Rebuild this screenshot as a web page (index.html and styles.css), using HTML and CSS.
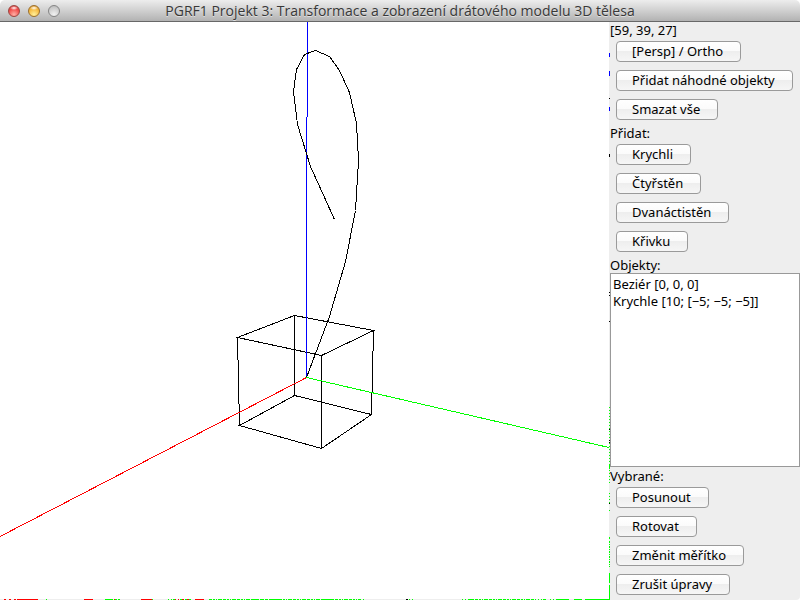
FILE: index.html
```html
<!DOCTYPE html>
<html lang="cs">
<head>
<meta charset="utf-8">
<title>PGRF1 Projekt 3</title>
<link rel="stylesheet" href="styles.css">
</head>
<body>
<div class="window">
  <header class="titlebar">
    <div class="lights">
      <button class="light red" type="button" aria-label="Zavřít"></button>
      <button class="light yellow" type="button" aria-label="Minimalizovat"></button>
      <button class="light gray" type="button" aria-label="Zvětšit"></button>
    </div>
    <h1 class="title">PGRF1 Projekt 3: Transformace a zobrazení drátového modelu 3D tělesa</h1>
  </header>
  <main class="content">
    <div class="scene">
      <svg class="drawing" viewBox="0 22 610 578" preserveAspectRatio="xMinYMin slice" aria-hidden="true">
        <rect class="edge" x="0" y="599" width="610" height="1"/>
        <rect class="edge" x="609" y="22" width="1" height="578"/>
        <g class="wire">
          <path class="k" d="M237.5 337.5L294.5 315.5L373.5 330.5L321.5 355.5ZM239.5 425.5L294.5 395.5L371.5 414.5L321.5 448.5ZM237.5 337.5L239.5 425.5M294.5 315.5V395.5M373.5 330.5L371.5 414.5M321.5 355.5V448.5"/>
          <path class="r" d="M306.5 377.5L0 536.5"/>
          <path class="g" d="M306.5 377.5L609 447.5"/>
          <path class="b" d="M306.5 377V117M307.5 117V22"/>
          <path class="k" d="M306.5 377.5L329.5 316.5L345.5 261.5L355.5 210.5L358.5 160.5L356.5 123.5L349.5 92.5L339.5 70.5L329.5 56.5L315.5 50.5L304.5 54.5L296.5 69.5L293.5 91.5L297.5 124.5L310.5 166.5L334.5 219.5"/>
        </g>
        <g class="wire">
          <path class="b" d="M609.5 53v4M609.5 71v5M609.5 107v4"/>
          <path class="k" d="M609.5 98v1M609.5 154v3M609.5 292v1M609.5 295v1M609.5 321v1"/>
          <path class="g" stroke-dasharray="1 2" d="M609.5 407V464M609.5 470V485M609.5 493V504"/>
          <path class="g" d="M609.5 464v5M609.5 510v1M609.5 537v2M609.5 573v10M609.5 585v15"/>
          <path class="g" stroke-dasharray="2 1 1 1" d="M609.5 541V567"/>
          <path class="k" d="M609.5 429v1M609.5 440v1M609.5 442v1M609.5 503v1"/>
          <path class="r" d="M4 599.5h2M9 599.5h2M14 599.5h2M17 599.5h21M84 599.5h9M114 599.5h1M141 599.5h11M175 599.5h1M178 599.5h1M182 599.5h2M187 599.5h2M195 599.5h9"/>
          <path class="g" d="M46 599.5h1M105 599.5h8M115 599.5h2M118 599.5h2M152 599.5h1M168 599.5h1M171 599.5h1M173 599.5h2M180 599.5h2M185 599.5h2M189 599.5h2M252 599.5h6M271 599.5h8M324 599.5h8M363 599.5h1M409 599.5h1M412 599.5h1M462 599.5h1M465 599.5h1M468 599.5h6M556 599.5h13M574 599.5h8M585 599.5h24"/>
          <path class="g" stroke-dasharray="3 1 2 1 1 1 4 1" d="M209 599.5H361M475 599.5H536"/>
          <path class="g" d="M538 599.5h1M541 599.5h1M543 599.5h3M550 599.5h1M553 599.5h1"/>
          <path class="k" d="M406 599.5h2"/>
        </g>
      </svg>
    </div>
    <aside class="panel">
      <p class="label">[59, 39, 27]</p>
      <div class="buttons">
        <button class="btn" type="button">[Persp] / Ortho</button>
        <button class="btn" type="button">Přidat náhodné objekty</button>
        <button class="btn" type="button">Smazat vše</button>
      </div>
      <p class="label">Přidat:</p>
      <div class="buttons">
        <button class="btn" type="button">Krychli</button>
        <button class="btn" type="button">Čtyřstěn</button>
        <button class="btn" type="button">Dvanáctistěn</button>
        <button class="btn" type="button">Křivku</button>
      </div>
      <label class="label" for="objects">Objekty:</label>
      <select class="list" id="objects" size="11">
        <option>Beziér [0, 0, 0]</option>
        <option>Krychle [10; [−5; −5; −5]]</option>
      </select>
      <p class="label">Vybrané:</p>
      <div class="buttons">
        <button class="btn" type="button">Posunout</button>
        <button class="btn" type="button">Rotovat</button>
        <button class="btn" type="button">Změnit měřítko</button>
        <button class="btn" type="button">Zrušit úpravy</button>
      </div>
    </aside>
  </main>
</div>
</body>
</html>
```
FILE: styles.css
```css
* { box-sizing: border-box; }
body {
  margin: 0;
  background: #fff;
  color: #000;
  font: 13px/16px "Noto Sans", "Open Sans", sans-serif;
}
.window {
  display: flex;
  flex-direction: column;
  height: 100vh;
}
.titlebar {
  display: grid;
  grid-template-columns: 60px 1fr 60px;
  align-items: center;
  height: 22px;
  padding: 0 8px;
  border-bottom: 1px solid #686868;
  border-radius: 5px 5px 0 0;
  background: linear-gradient(#ededed, #d0d0d0 50%, #b2b2b2);
}
.lights { display: flex; gap: 8px; }
.light {
  width: 12px;
  height: 12px;
  padding: 0;
  border: 1px solid #777;
  border-radius: 50%;
}
.red {
  border-color: #9c4640;
  background: radial-gradient(ellipse 4px 2px at 50% 20%, #fff, transparent), radial-gradient(circle at 50% 85%, #ffb0a5, #f04a48 60%, #c83434);
}
.yellow {
  border-color: #9b702c;
  background: radial-gradient(ellipse 4px 2px at 50% 20%, #fff, transparent), radial-gradient(circle at 50% 85%, #fff09a, #f5b83e 60%, #cf8a28);
}
.gray {
  border-color: #858585;
  background: radial-gradient(circle at 50% 85%, #f2f2f2, #cfcfcf 60%, #b5b5b5);
}
.title {
  margin: 0;
  font-family: "Open Sans", "Noto Sans", sans-serif;
  font-size: 14px;
  font-weight: 400;
  text-align: center;
  white-space: nowrap;
  color: #383838;
  text-shadow: 0 1px 0 #e0e0e0;
}
.content {
  display: flex;
  flex: 1;
  min-height: 0;
}
.scene { flex: 1; min-width: 0; overflow: hidden; }
.drawing { display: block; width: 100%; height: 100%; }
.edge { fill: #eee; }
.wire { fill: none; shape-rendering: crispEdges; }
.k { stroke: #000; }
.r { stroke: #f00; }
.g { stroke: #0f0; }
.b { stroke: #00f; }
.panel {
  display: flex;
  flex-direction: column;
  width: 190px;
  background: #eee;
  border-radius: 0 0 4px 0;
}
.label { display: block; margin: 0; height: 16px; }
.buttons {
  display: flex;
  flex-direction: column;
  align-items: flex-start;
  gap: 8px;
  padding: 3px 6px 5px;
}
.btn {
  height: 21px;
  padding: 0 17px 0 15px;
  border: 1px solid #9a9a9a;
  border-radius: 4px;
  background: linear-gradient(#fff, #fbfbfb 45%, #eee 50%, #f6f6f6);
  color: #000;
  font: inherit;
  line-height: 19px;
  white-space: nowrap;
}
.list {
  flex: 1;
  min-height: 0;
  width: 100%;
  margin: 0 0 1px;
  padding: 1px 0;
  border: 1px solid #999;
  border-radius: 0;
  background: #fff;
  color: #000;
  font: 13px/17px "Noto Sans", "Open Sans", sans-serif;
  overflow: hidden;
  outline: none;
}
.list option { height: 17px; min-height: 17px; padding: 0 2px; line-height: 17px; }
```
